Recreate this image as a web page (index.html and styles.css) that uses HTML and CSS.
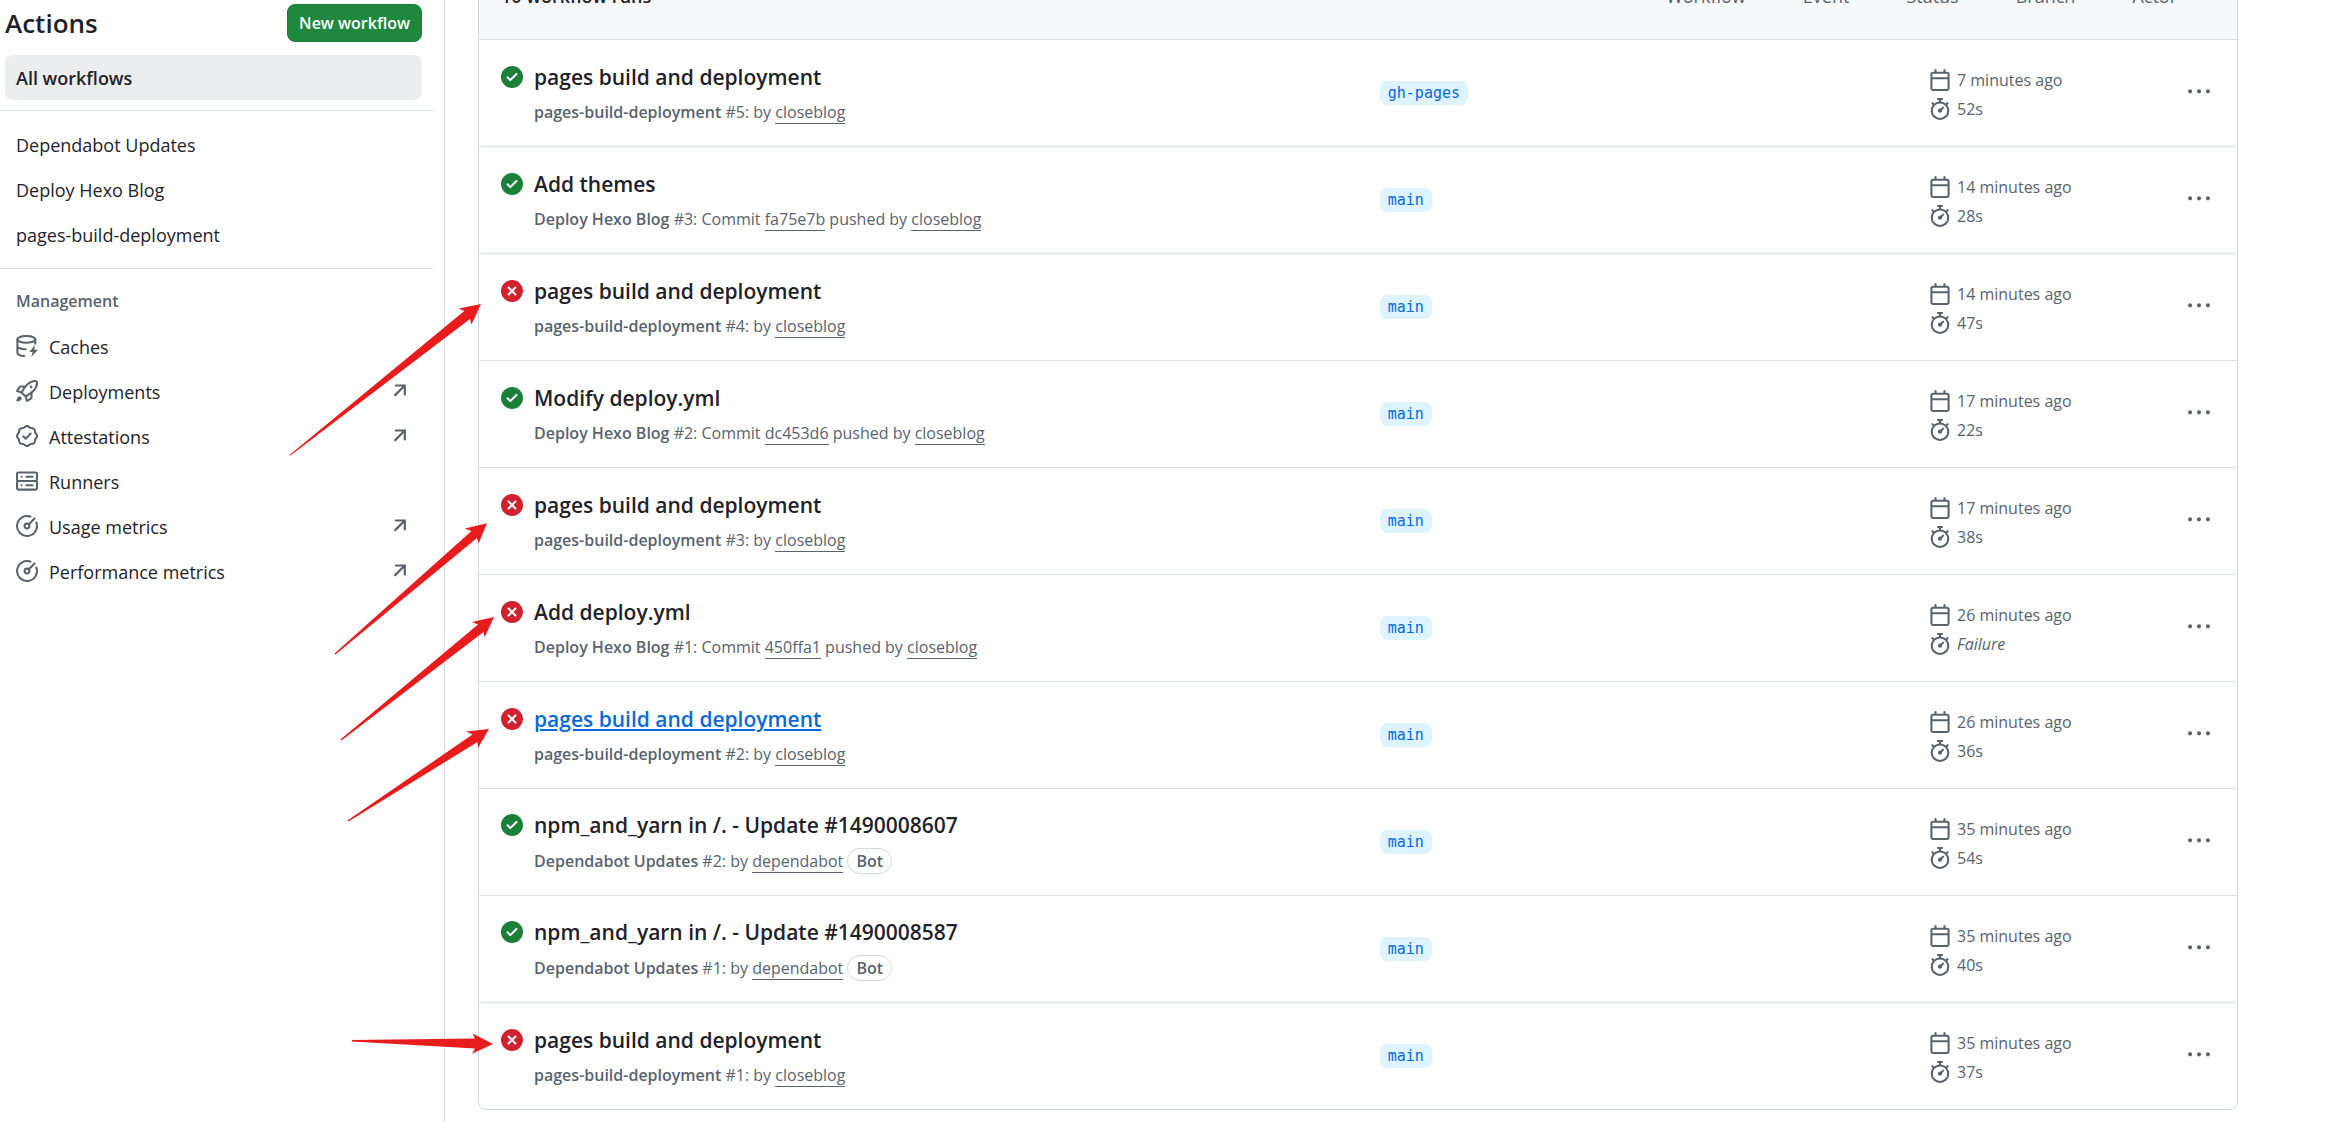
FILE: index.html
```html
<!DOCTYPE html>
<html lang="en">
<head>
  <meta charset="UTF-8">
  <title>Actions</title>
  <link rel="stylesheet" href="styles.css">
</head>
<body>

<svg class="sprite" aria-hidden="true">
  <symbol id="check" viewBox="0 0 16 16"><path d="M8 16A8 8 0 1 1 8 0a8 8 0 0 1 0 16Zm3.78-9.72a.751.751 0 0 0-.018-1.042.751.751 0 0 0-1.042-.018L6.75 9.19 5.28 7.72a.751.751 0 0 0-1.042.018.751.751 0 0 0-.018 1.042l2 2a.75.75 0 0 0 1.06 0Z"/></symbol>
  <symbol id="fail" viewBox="0 0 16 16"><path d="M2.343 13.657A8 8 0 1 1 13.658 2.343 8 8 0 0 1 2.343 13.657ZM6.03 4.97a.751.751 0 0 0-1.042.018.751.751 0 0 0-.018 1.042L6.94 8 4.97 9.97a.749.749 0 0 0 .326 1.275.749.749 0 0 0 .734-.215L8 9.06l1.97 1.97a.749.749 0 0 0 1.275-.326.749.749 0 0 0-.215-.734L9.06 8l1.97-1.97a.749.749 0 0 0-.326-1.275.749.749 0 0 0-.734.215L8 6.94Z"/></symbol>
  <symbol id="calendar" viewBox="0 0 16 16"><path d="M4.75 0a.75.75 0 0 1 .75.75V2h5V.75a.75.75 0 0 1 1.5 0V2h1.25c.966 0 1.75.784 1.75 1.75v10.5A1.75 1.75 0 0 1 13.25 16H2.75A1.75 1.75 0 0 1 1 14.25V3.75C1 2.784 1.784 2 2.75 2H4V.75A.75.75 0 0 1 4.75 0ZM2.5 7.5v6.75c0 .138.112.25.25.25h10.5a.25.25 0 0 0 .25-.25V7.5Zm10.75-4H2.75a.25.25 0 0 0-.25.25V6h11V3.75a.25.25 0 0 0-.25-.25Z"/></symbol>
  <symbol id="stopwatch" viewBox="0 0 16 16"><path d="M5.75.75A.75.75 0 0 1 6.5 0h3a.75.75 0 0 1 0 1.5h-.75v1l-.001.041a6.724 6.724 0 0 1 3.464 1.435l.007-.006.75-.75a.749.749 0 0 1 1.275.326.749.749 0 0 1-.215.734l-.75.75-.006.007a6.75 6.75 0 1 1-10.548 0L2.72 5.03l-.75-.75a.751.751 0 0 1 .018-1.042.751.751 0 0 1 1.042-.018l.75.75.007.006A6.72 6.72 0 0 1 7.25 2.541V1.5H6.5a.75.75 0 0 1-.75-.75ZM8 14.5a5.25 5.25 0 1 0-.001-10.501A5.25 5.25 0 0 0 8 14.5Zm.389-6.7 1.33-1.33a.75.75 0 1 1 1.061 1.06L9.45 8.861A1.503 1.503 0 0 1 8 10.75a1.499 1.499 0 1 1 .389-2.95Z"/></symbol>
  <symbol id="kebab" viewBox="0 0 16 16"><path d="M8 9a1.5 1.5 0 1 0 0-3 1.5 1.5 0 0 0 0 3ZM1.5 9a1.5 1.5 0 1 0 0-3 1.5 1.5 0 0 0 0 3Zm13 0a1.5 1.5 0 1 0 0-3 1.5 1.5 0 0 0 0 3Z"/></symbol>
  <symbol id="arrow" viewBox="0 0 16 16"><path d="M5 4h6.500v6.500M11.300 4.200 4.500 11" fill="none" stroke="currentColor" stroke-width="1.6" stroke-linecap="round"/></symbol>
  <symbol id="cache" viewBox="0 0 16 16"><g fill="none" stroke="currentColor" stroke-width="1.5" stroke-linecap="round" stroke-linejoin="round"><ellipse cx="7.5" cy="3.2" rx="6.5" ry="2.5"/><path d="M1 3.2v9.6c0 1.3 2 2.4 5 2.5M14 3.2v3.2M1 8c0 1.3 2.500 2.400 6 2.400"/></g><path d="M13.800 7.200 9.700 12.300h2.400l-1 3.700 4.900-5.200h-2.700z"/></symbol>
  <symbol id="rocket" viewBox="0 0 16 16"><path d="M14.064 0h.186C15.216 0 16 .784 16 1.75v.186a8.752 8.752 0 0 1-2.564 6.186l-.458.459c-.314.314-.641.616-.979.904v3.207c0 .608-.315 1.172-.833 1.49l-2.774 1.707a.749.749 0 0 1-1.11-.418l-.954-3.102a1.214 1.214 0 0 1-.145-.125L3.754 9.816a1.218 1.218 0 0 1-.124-.145L.528 8.717a.749.749 0 0 1-.418-1.11l1.71-2.774A1.748 1.748 0 0 1 3.31 4h3.204c.288-.338.59-.665.904-.979l.459-.458A8.749 8.749 0 0 1 14.064 0ZM8.938 3.623h-.002l-.458.458c-.76.76-1.437 1.598-2.02 2.5l-1.5 2.317 2.143 2.143 2.317-1.5c.902-.583 1.74-1.26 2.499-2.02l.459-.458a7.25 7.25 0 0 0 2.123-5.127V1.75a.25.25 0 0 0-.25-.25h-.186a7.249 7.249 0 0 0-5.125 2.123ZM3.56 14.56c-.732.732-2.334 1.045-3.005 1.148a.234.234 0 0 1-.201-.064.234.234 0 0 1-.064-.201c.103-.671.416-2.273 1.15-3.003a1.502 1.502 0 1 1 2.12 2.12Zm6.94-3.935c-.088.06-.177.118-.266.175l-2.35 1.521.548 1.783 1.949-1.2a.25.25 0 0 0 .119-.213ZM3.678 8.116 5.2 5.766c.058-.09.117-.178.176-.266H3.309a.25.25 0 0 0-.213.119l-1.2 1.95ZM12 5a1 1 0 1 1-2 0 1 1 0 0 1 2 0Z"/></symbol>
  <symbol id="verified" viewBox="0 0 16 16"><path d="m9.585.52.929.68c.153.112.331.186.518.215l1.138.175a2.678 2.678 0 0 1 2.24 2.24l.174 1.139c.029.187.103.365.215.518l.68.928a2.677 2.677 0 0 1 0 3.17l-.68.928a1.174 1.174 0 0 0-.215.518l-.175 1.138a2.678 2.678 0 0 1-2.241 2.241l-1.138.175a1.17 1.17 0 0 0-.518.215l-.928.68a2.677 2.677 0 0 1-3.17 0l-.928-.68a1.174 1.174 0 0 0-.518-.215L3.83 14.41a2.678 2.678 0 0 1-2.24-2.24l-.175-1.138a1.17 1.17 0 0 0-.215-.518l-.68-.928a2.677 2.677 0 0 1 0-3.17l.68-.928c.112-.153.186-.331.215-.518l.175-1.14a2.678 2.678 0 0 1 2.24-2.24l1.139-.175c.187-.029.365-.103.518-.215l.928-.68a2.677 2.677 0 0 1 3.17 0ZM7.303 1.728l-.927.68a2.67 2.67 0 0 1-1.18.489l-1.137.174a1.179 1.179 0 0 0-.987.987l-.174 1.136a2.677 2.677 0 0 1-.489 1.18l-.68.928a1.18 1.18 0 0 0 0 1.394l.68.927c.256.348.424.753.489 1.18l.174 1.137c.078.509.478.909.987.987l1.136.174a2.67 2.67 0 0 1 1.18.489l.928.68c.414.305.979.305 1.394 0l.927-.68a2.67 2.67 0 0 1 1.18-.489l1.137-.174a1.18 1.18 0 0 0 .987-.987l.174-1.136a2.67 2.67 0 0 1 .489-1.18l.68-.928a1.176 1.176 0 0 0 0-1.394l-.68-.927a2.686 2.686 0 0 1-.489-1.18l-.174-1.137a1.179 1.179 0 0 0-.987-.987l-1.136-.174a2.677 2.677 0 0 1-1.18-.489l-.928-.68a1.176 1.176 0 0 0-1.394 0ZM11.28 6.78l-3.75 3.75a.75.75 0 0 1-1.06 0L4.72 8.78a.751.751 0 0 1 .018-1.042.751.751 0 0 1 1.042-.018L7 8.94l3.22-3.22a.751.751 0 0 1 1.042.018.751.751 0 0 1 .018 1.042Z"/></symbol>
  <symbol id="server" viewBox="0 0 16 16"><g fill="none" stroke="currentColor" stroke-width="1.5" stroke-linecap="round"><rect x=".75" y="1.75" width="14.5" height="6.25" rx="1"/><rect x=".75" y="8" width="14.5" height="6.250" rx="1"/><path d="M4 4.900h.01M7.500 4.900H12M4 11.100h.01M7.500 11.100H12"/></g></symbol>
  <symbol id="meter" viewBox="0 0 16 16"><g fill="none" stroke="currentColor" stroke-width="1.5" stroke-linecap="round"><path d="M10.500 1.200A7.250 7.250 0 1 0 14.800 5.500"/><circle cx="8" cy="8" r="1.750"/><path d="M9.300 6.700 13.500 2.500"/></g></symbol>
</svg>

<div class="layout">
  <aside class="sidebar">
    <div class="sidebar-head">
      <h2>Actions</h2>
      <button class="new-btn" type="button">New workflow</button>
    </div>
    <nav>
      <a class="item current" href="#">All workflows</a>
      <hr>
      <div class="group">
        <a class="item" href="#">Dependabot Updates</a>
        <a class="item" href="#">Deploy Hexo Blog</a>
        <a class="item" href="#">pages-build-deployment</a>
      </div>
      <hr>
      <h3>Management</h3>
      <a class="item" href="#"><svg class="icon"><use href="#cache"/></svg>Caches</a>
      <a class="item" href="#"><svg class="icon"><use href="#rocket"/></svg>Deployments<svg class="icon out"><use href="#arrow"/></svg></a>
      <a class="item" href="#"><svg class="icon"><use href="#verified"/></svg>Attestations<svg class="icon out"><use href="#arrow"/></svg></a>
      <a class="item" href="#"><svg class="icon"><use href="#server"/></svg>Runners</a>
      <a class="item" href="#"><svg class="icon"><use href="#meter"/></svg>Usage metrics<svg class="icon out"><use href="#arrow"/></svg></a>
      <a class="item" href="#"><svg class="icon"><use href="#meter"/></svg>Performance metrics<svg class="icon out"><use href="#arrow"/></svg></a>
    </nav>
  </aside>

  <main>
    <div class="box">
      <div class="box-header">
        <strong>10 workflow runs</strong>
        <div class="filters">
          <button type="button">Workflow</button>
          <button type="button">Event</button>
          <button type="button">Status</button>
          <button type="button">Branch</button>
          <button type="button">Actor</button>
        </div>
      </div>

      <div class="row">
        <div class="run">
          <svg class="icon success"><use href="#check"/></svg>
          <div>
            <a class="title" href="#">pages build and deployment</a>
            <div class="meta"><b>pages-build-deployment</b> #5: by <a href="#">closeblog</a></div>
          </div>
        </div>
        <div class="ref"><a class="branch" href="#">gh-pages</a></div>
        <div class="side">
          <div class="times">
            <div><svg class="icon"><use href="#calendar"/></svg>7 minutes ago</div>
            <div><svg class="icon"><use href="#stopwatch"/></svg>52s</div>
          </div>
          <button class="more" type="button" aria-label="Show options"><svg class="icon"><use href="#kebab"/></svg></button>
        </div>
      </div>

      <div class="row">
        <div class="run">
          <svg class="icon success"><use href="#check"/></svg>
          <div>
            <a class="title" href="#">Add themes</a>
            <div class="meta"><b>Deploy Hexo Blog</b> #3: Commit <a href="#">fa75e7b</a> pushed by <a href="#">closeblog</a></div>
          </div>
        </div>
        <div class="ref"><a class="branch" href="#">main</a></div>
        <div class="side">
          <div class="times">
            <div><svg class="icon"><use href="#calendar"/></svg>14 minutes ago</div>
            <div><svg class="icon"><use href="#stopwatch"/></svg>28s</div>
          </div>
          <button class="more" type="button" aria-label="Show options"><svg class="icon"><use href="#kebab"/></svg></button>
        </div>
      </div>

      <div class="row">
        <div class="run">
          <svg class="icon failure"><use href="#fail"/></svg>
          <div>
            <a class="title" href="#">pages build and deployment</a>
            <div class="meta"><b>pages-build-deployment</b> #4: by <a href="#">closeblog</a></div>
          </div>
        </div>
        <div class="ref"><a class="branch" href="#">main</a></div>
        <div class="side">
          <div class="times">
            <div><svg class="icon"><use href="#calendar"/></svg>14 minutes ago</div>
            <div><svg class="icon"><use href="#stopwatch"/></svg>47s</div>
          </div>
          <button class="more" type="button" aria-label="Show options"><svg class="icon"><use href="#kebab"/></svg></button>
        </div>
      </div>

      <div class="row">
        <div class="run">
          <svg class="icon success"><use href="#check"/></svg>
          <div>
            <a class="title" href="#">Modify deploy.yml</a>
            <div class="meta"><b>Deploy Hexo Blog</b> #2: Commit <a href="#">dc453d6</a> pushed by <a href="#">closeblog</a></div>
          </div>
        </div>
        <div class="ref"><a class="branch" href="#">main</a></div>
        <div class="side">
          <div class="times">
            <div><svg class="icon"><use href="#calendar"/></svg>17 minutes ago</div>
            <div><svg class="icon"><use href="#stopwatch"/></svg>22s</div>
          </div>
          <button class="more" type="button" aria-label="Show options"><svg class="icon"><use href="#kebab"/></svg></button>
        </div>
      </div>

      <div class="row">
        <div class="run">
          <svg class="icon failure"><use href="#fail"/></svg>
          <div>
            <a class="title" href="#">pages build and deployment</a>
            <div class="meta"><b>pages-build-deployment</b> #3: by <a href="#">closeblog</a></div>
          </div>
        </div>
        <div class="ref"><a class="branch" href="#">main</a></div>
        <div class="side">
          <div class="times">
            <div><svg class="icon"><use href="#calendar"/></svg>17 minutes ago</div>
            <div><svg class="icon"><use href="#stopwatch"/></svg>38s</div>
          </div>
          <button class="more" type="button" aria-label="Show options"><svg class="icon"><use href="#kebab"/></svg></button>
        </div>
      </div>

      <div class="row">
        <div class="run">
          <svg class="icon failure"><use href="#fail"/></svg>
          <div>
            <a class="title" href="#">Add deploy.yml</a>
            <div class="meta"><b>Deploy Hexo Blog</b> #1: Commit <a href="#">450ffa1</a> pushed by <a href="#">closeblog</a></div>
          </div>
        </div>
        <div class="ref"><a class="branch" href="#">main</a></div>
        <div class="side">
          <div class="times">
            <div><svg class="icon"><use href="#calendar"/></svg>26 minutes ago</div>
            <div><svg class="icon"><use href="#stopwatch"/></svg><em>Failure</em></div>
          </div>
          <button class="more" type="button" aria-label="Show options"><svg class="icon"><use href="#kebab"/></svg></button>
        </div>
      </div>

      <div class="row">
        <div class="run">
          <svg class="icon failure"><use href="#fail"/></svg>
          <div>
            <a class="title active" href="#">pages build and deployment</a>
            <div class="meta"><b>pages-build-deployment</b> #2: by <a href="#">closeblog</a></div>
          </div>
        </div>
        <div class="ref"><a class="branch" href="#">main</a></div>
        <div class="side">
          <div class="times">
            <div><svg class="icon"><use href="#calendar"/></svg>26 minutes ago</div>
            <div><svg class="icon"><use href="#stopwatch"/></svg>36s</div>
          </div>
          <button class="more" type="button" aria-label="Show options"><svg class="icon"><use href="#kebab"/></svg></button>
        </div>
      </div>

      <div class="row">
        <div class="run">
          <svg class="icon success"><use href="#check"/></svg>
          <div>
            <a class="title" href="#">npm_and_yarn in /. - Update #1490008607</a>
            <div class="meta"><b>Dependabot Updates</b> #2: by <a href="#">dependabot</a> <span class="bot">Bot</span></div>
          </div>
        </div>
        <div class="ref"><a class="branch" href="#">main</a></div>
        <div class="side">
          <div class="times">
            <div><svg class="icon"><use href="#calendar"/></svg>35 minutes ago</div>
            <div><svg class="icon"><use href="#stopwatch"/></svg>54s</div>
          </div>
          <button class="more" type="button" aria-label="Show options"><svg class="icon"><use href="#kebab"/></svg></button>
        </div>
      </div>

      <div class="row">
        <div class="run">
          <svg class="icon success"><use href="#check"/></svg>
          <div>
            <a class="title" href="#">npm_and_yarn in /. - Update #1490008587</a>
            <div class="meta"><b>Dependabot Updates</b> #1: by <a href="#">dependabot</a> <span class="bot">Bot</span></div>
          </div>
        </div>
        <div class="ref"><a class="branch" href="#">main</a></div>
        <div class="side">
          <div class="times">
            <div><svg class="icon"><use href="#calendar"/></svg>35 minutes ago</div>
            <div><svg class="icon"><use href="#stopwatch"/></svg>40s</div>
          </div>
          <button class="more" type="button" aria-label="Show options"><svg class="icon"><use href="#kebab"/></svg></button>
        </div>
      </div>

      <div class="row">
        <div class="run">
          <svg class="icon failure"><use href="#fail"/></svg>
          <div>
            <a class="title" href="#">pages build and deployment</a>
            <div class="meta"><b>pages-build-deployment</b> #1: by <a href="#">closeblog</a></div>
          </div>
        </div>
        <div class="ref"><a class="branch" href="#">main</a></div>
        <div class="side">
          <div class="times">
            <div><svg class="icon"><use href="#calendar"/></svg>35 minutes ago</div>
            <div><svg class="icon"><use href="#stopwatch"/></svg>37s</div>
          </div>
          <button class="more" type="button" aria-label="Show options"><svg class="icon"><use href="#kebab"/></svg></button>
        </div>
      </div>
    </div>
  </main>
</div>

<!-- arrows pointing at the failed runs -->
<svg class="marks" viewBox="0 0 500 1100" aria-hidden="true">
  <path d="M289.500 455 464.300 311 458.700 308.500 481 304 471.500 324.500 470 319 290.500 455.500Z"/>
  <path d="M334.500 653.500 471.500 531 464.700 528.500 487 523.300 478.500 543.500 477 538 335.500 654.500Z"/>
  <path d="M340.500 739.500 478 624.500 472 622 494 617 484.700 637.300 483.500 632 341.500 740.500Z"/>
  <path d="M347.500 820.500 472.500 734.500 466 731.500 489 729 478 748 477.500 742 348.500 821.500Z"/>
  <path d="M352 1040 475 1038.500 472.500 1033.500 493 1044 472 1053.700 475 1048.500 352 1041.500Z"/>
</svg>

</body>
</html>
```
FILE: styles.css
```css
* {
  box-sizing: border-box;
}
body {
  margin: 0;
  font-family: "Open Sans", "Noto Sans", sans-serif;
  font-size: 18px;
  color: #1f2328;
  background: #fff;
}
a {
  color: inherit;
  text-decoration: none;
}
button {
  font-family: inherit;
  border: none;
  background: none;
  padding: 0;
  cursor: pointer;
}
.sprite {
  display: none;
}
.icon {
  width: 22px;
  height: 22px;
  flex: none;
  color: #59636e;
  fill: currentColor;
}
.layout {
  display: flex;
  min-height: 100vh;
}

/* sidebar */
.sidebar {
  width: 445px;
  flex: none;
  padding: 4px 11px 0 0;
  border-right: 1px solid #d1d9e0;
}
.sidebar-head {
  display: flex;
  align-items: center;
  justify-content: space-between;
  padding: 0 11px 0 5px;
  margin-bottom: 13px;
}
.sidebar-head h2 {
  margin: 0;
  font-size: 26px;
  line-height: 38px;
  font-weight: 600;
}
.new-btn {
  height: 38px;
  padding: 0 11px;
  border: 1px solid #1c7c37;
  border-radius: 8px;
  background: #1f883d;
  color: #fff;
  font-size: 16px;
  font-weight: 600;
}
.item {
  display: flex;
  align-items: center;
  gap: 11px;
  height: 45px;
  margin: 0 11px 0 5px;
  padding: 0 11px;
  border-radius: 8px;
}
.item.current {
  background: #ecedef;
  font-weight: 600;
}
.item .icon {
  margin-bottom: 2px;
}
.item .out {
  margin-left: auto;
}
hr {
  margin: 10px 0;
  border: none;
  border-top: 1px solid #d9e0e6;
}
.group {
  padding: 1px 0;
}
.sidebar h3 {
  margin: 0;
  padding: 10px 16px 11px;
  font-size: 16px;
  line-height: 24px;
  font-weight: 600;
  color: #59636e;
}

/* runs list */
main {
  flex: 1;
  margin-top: -48px;
  padding: 0 101px 0 33px;
}
.box {
  border: 1px solid #d1d9e0;
  border-radius: 8px;
}
.box-header {
  display: flex;
  align-items: center;
  justify-content: space-between;
  height: 86px;
  padding: 0 60px 0 22px;
  background: #f6f8fa;
}
.box-header strong {
  font-size: 18px;
  font-weight: 600;
}
.filters {
  display: flex;
  gap: 57px;
}
.filters button {
  font-size: 18px;
  color: #59636e;
}
.row {
  display: grid;
  grid-template-columns: 8fr 5fr 286px;
  align-items: center;
  min-height: 107px;
  padding: 0 22px;
  border-top: 1px solid #d9e0e6;
}
.run {
  display: flex;
  gap: 11px;
}
.run .icon {
  margin-top: 4px;
}
.success {
  color: #1a7f37;
}
.failure {
  color: #cf222e;
}
.title {
  font-size: 21px;
  line-height: 30px;
  font-weight: 600;
}
.title.active {
  color: #0969da;
  text-decoration: underline;
}
.meta {
  margin-top: 8px;
  font-size: 16px;
  line-height: 24px;
  color: #59636e;
}
.meta b {
  font-weight: 600;
}
.meta a {
  border-bottom: 1px solid #59636e;
}
.bot {
  display: inline-block;
  padding: 0 8px;
  border: 1px solid #d1d9e0;
  border-radius: 14px;
  font-weight: 600;
}
.ref {
  padding-bottom: 3px;
}
.branch {
  display: inline-block;
  padding: 0 8px;
  border-radius: 8px;
  background: #ddf4ff;
  color: #0969da;
  font-family: "DejaVu Sans Mono", monospace;
  font-size: 15px;
  line-height: 24px;
}
.side {
  display: flex;
  align-items: center;
  justify-content: space-between;
  padding-right: 5px;
}
.times {
  padding-top: 3px;
  font-size: 16px;
  line-height: 29px;
  color: #59636e;
}
.times div {
  display: flex;
  align-items: center;
  gap: 6px;
}
.more {
  padding-bottom: 2px;
}
.more .icon {
  display: block;
}

.marks {
  position: absolute;
  top: 0;
  left: 0;
  width: 500px;
  height: 1100px;
  fill: #e81c1c;
  pointer-events: none;
}
```
